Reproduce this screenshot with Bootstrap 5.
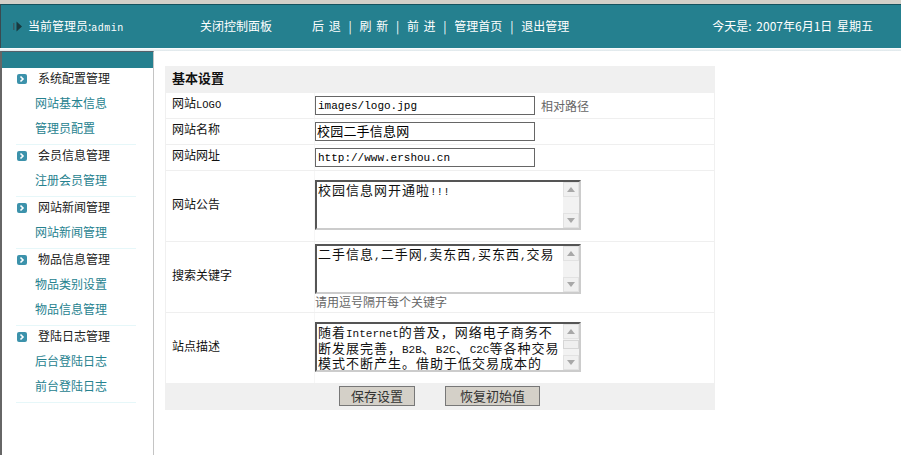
<!DOCTYPE html>
<html lang="zh-CN">
<head>
<meta charset="utf-8">
<title>基本设置</title>
<link href="https://cdn.jsdelivr.net/npm/bootstrap@5.3.0/dist/css/bootstrap.min.css" rel="stylesheet">
<style>
html,body{height:100%;overflow:hidden}
body{font-family:"Noto Sans CJK SC","Liberation Sans",sans-serif;font-size:12px;line-height:1.2;color:#111;background:#fff;width:901px;height:455px}
.page-shell{height:455px;border-top:4px solid #d4d0c8}
.top-band{height:44px;background:#25808f;border-top:1px solid #17525e;border-left:1px solid #3a4a50;color:#fff;padding-left:12px;flex:none}
.top-who{width:187px}
.top-glyph{width:15px;flex:none}
.who-name{font-family:"Liberation Mono",monospace;font-size:10px;letter-spacing:.5px}
.top-close{width:112px}
.top-nav{gap:7.75px;word-spacing:2px}
.top-date{margin-left:auto;padding-right:28px;word-spacing:2px}
.band-gap{height:3px;flex:none;background:linear-gradient(#fff 0,#dde6ea 100%)}
.lower-area{flex:1;min-height:0}
.side-col{width:154px;flex:none;border-left:2px solid #666;border-right:1px solid #c4c4c4;border-top:1px solid #55606a}
.side-cap{height:16px;background:#25808f}
.side-group{margin:0 17px 0 14px;padding-bottom:1px;border-bottom:1px solid #e6f7f9}
.side-head{height:25px;padding:0 0 4px 1px;color:#222}
.side-group:first-of-type .side-head{height:23px}
.side-glyph{width:10px;height:10px;margin-right:11px;flex:none}
.side-link{height:25px;padding:0 0 5px 19px;color:#26828f;text-decoration:none}
.side-link:hover{color:#26828f}
.main-col{padding:15px 0 0 11px}
.form-panel{width:550px;border-left:1px solid #f0f0f0;border-right:1px solid #f0f0f0}
.panel-title{height:27px;background:#f0f0f0;padding:0 0 3px 6px;font-weight:700;font-size:13px;color:#111}
.form-line{border-bottom:1px solid #efefef}
.line-s{height:26px}
.line-l{height:71px}
.line-m{height:70px;border-bottom:0}
.line-label{width:148px;flex:none;padding:0 0 4px 6px}
.label-latin{font-family:"Liberation Mono",monospace;font-size:10.5px;line-height:0;padding-top:1px}
.line-value{border-left:1px solid #f6f6f6;padding-left:0}
.field-text{width:220px;height:19px;border:1px solid #666;border-radius:0;padding:1px 2px 0;background:#fff;color:#000;outline:none;font-family:"Liberation Mono",monospace;font-size:11px}
.field-cjk{font-family:"Noto Sans CJK SC",sans-serif;font-size:13px;padding:0 0 2px 1px;letter-spacing:.2px}
.field-hint{color:#666;margin:2px 0 0 6px}
.hint-below{color:#666;margin-top:1px}
.area-box{width:266px;height:50px;border:2px solid;border-color:#555 #ccc #ccc #555}
.field-area{flex:1 1 auto;min-width:0;padding:0 0 0 1px;background:#fff;color:#111;outline:none;overflow:hidden;font-family:"Noto Sans CJK SC",sans-serif;font-size:13px;line-height:15.7px;letter-spacing:1px}
.area-latin{font-family:"Liberation Mono",monospace;font-size:11px;letter-spacing:0;line-height:0}
.bar-col{width:16px;flex:none;background:#f2f2f2}
.bar-btn{height:15px;flex:none;background:#f0f0f0;border:1px solid #e2e2e2}
.bar-track{flex:1;min-height:0}
.bar-thumb{height:9px;margin-top:1px;background:#efefef;border:1px solid #d6d6d6}
.pad-9{padding-top:9px}
.pad-2{padding-top:2px}
.panel-actions{height:27px;background:#f0f0f0;gap:30px;padding:0 1px 2px 0}
.act-btn{height:20px;padding:0;border:1px solid #777;border-radius:0;background:#d4d0c8;color:#333;font-size:13px;line-height:1}
.act-btn:hover,.act-btn:active{background:#d4d0c8!important;border-color:#777!important;color:#333!important}
.act-save{width:76px}
.act-reset{width:95px}
</style>
</head>
<body>
<svg width="0" height="0" class="d-block position-absolute" aria-hidden="true">
  <symbol id="chev" viewBox="0 0 10 10"><rect width="10" height="10" rx="2" fill="#3c92ab"/><path d="M3.500 2.500 6 5 3.500 7.500" fill="none" stroke="#fff" stroke-width="1.600"/></symbol>
  <symbol id="bar-up" viewBox="0 0 8 5"><path d="M4 0 8 5H0z" fill="#a8a8a8"/></symbol>
  <symbol id="bar-down" viewBox="0 0 8 5"><path d="M4 5 8 0H0z" fill="#a8a8a8"/></symbol>
</svg>
<div class="page-shell d-flex flex-column">
  <header class="top-band d-flex align-items-center">
    <div class="top-who d-flex align-items-center">
      <svg class="top-glyph" height="11" viewBox="0 0 15 11" aria-hidden="true"><path d="M0 2h1.500v7H0z" fill="#3b5a62"/><path d="M3.500 0.500 9 5.500l-5.500 5z" fill="#17393f"/></svg>
      <span>当前管理员:<span class="who-name">admin</span></span>
    </div>
    <div class="top-close">关闭控制面板</div>
    <nav class="top-nav d-flex">
      <span>后 退</span><span>|</span><span>刷 新</span><span>|</span><span>前 进</span><span>|</span><span>管理首页</span><span>|</span><span>退出管理</span>
    </nav>
    <div class="top-date">今天是: 2007年6月1日 星期五</div>
  </header>
  <div class="band-gap"></div>
  <div class="lower-area d-flex">
    <aside class="side-col">
      <div class="side-cap"></div>
      <div class="side-group">
        <div class="side-head d-flex align-items-center"><svg class="side-glyph" aria-hidden="true"><use href="#chev"/></svg>系统配置管理</div>
        <a class="side-link d-flex align-items-center" href="#">网站基本信息</a>
        <a class="side-link d-flex align-items-center" href="#">管理员配置</a>
      </div>
      <div class="side-group">
        <div class="side-head d-flex align-items-center"><svg class="side-glyph" aria-hidden="true"><use href="#chev"/></svg>会员信息管理</div>
        <a class="side-link d-flex align-items-center" href="#">注册会员管理</a>
      </div>
      <div class="side-group">
        <div class="side-head d-flex align-items-center"><svg class="side-glyph" aria-hidden="true"><use href="#chev"/></svg>网站新闻管理</div>
        <a class="side-link d-flex align-items-center" href="#">网站新闻管理</a>
      </div>
      <div class="side-group">
        <div class="side-head d-flex align-items-center"><svg class="side-glyph" aria-hidden="true"><use href="#chev"/></svg>物品信息管理</div>
        <a class="side-link d-flex align-items-center" href="#">物品类别设置</a>
        <a class="side-link d-flex align-items-center" href="#">物品信息管理</a>
      </div>
      <div class="side-group">
        <div class="side-head d-flex align-items-center"><svg class="side-glyph" aria-hidden="true"><use href="#chev"/></svg>登陆日志管理</div>
        <a class="side-link d-flex align-items-center" href="#">后台登陆日志</a>
        <a class="side-link d-flex align-items-center" href="#">前台登陆日志</a>
      </div>
    </aside>
    <main class="main-col flex-grow-1">
      <form class="form-panel">
        <div class="panel-title d-flex align-items-center">基本设置</div>
        <div class="form-line line-s d-flex">
          <div class="line-label d-flex align-items-center"><span>网站<span class="label-latin">LOGO</span></span></div>
          <div class="line-value d-flex align-items-center flex-grow-1"><input class="field-text" type="text" value="images/logo.jpg"><span class="field-hint">相对路径</span></div>
        </div>
        <div class="form-line line-s d-flex">
          <div class="line-label d-flex align-items-center">网站名称</div>
          <div class="line-value d-flex align-items-center flex-grow-1"><input class="field-text field-cjk" type="text" value="校园二手信息网"></div>
        </div>
        <div class="form-line line-s d-flex">
          <div class="line-label d-flex align-items-center">网站网址</div>
          <div class="line-value d-flex align-items-center flex-grow-1"><input class="field-text" type="text" value="http://www.ershou.cn"></div>
        </div>
        <div class="form-line line-l d-flex">
          <div class="line-label d-flex align-items-center">网站公告</div>
          <div class="line-value pad-9 flex-grow-1">
            <div class="area-box d-flex">
              <div class="field-area" role="textbox" contenteditable="true">校园信息网开通啦<span class="area-latin">!!!</span></div>
              <div class="bar-col d-flex flex-column">
                <div class="bar-btn d-flex align-items-center justify-content-center"><svg width="8" height="5" aria-hidden="true"><use href="#bar-up"/></svg></div>
                <div class="bar-track"></div>
                <div class="bar-btn d-flex align-items-center justify-content-center"><svg width="8" height="5" aria-hidden="true"><use href="#bar-down"/></svg></div>
              </div>
            </div>
          </div>
        </div>
        <div class="form-line line-l d-flex">
          <div class="line-label d-flex align-items-center">搜索关键字</div>
          <div class="line-value pad-2 flex-grow-1">
            <div class="area-box d-flex">
              <div class="field-area" role="textbox" contenteditable="true">二手信息<span class="area-latin">,</span>二手网<span class="area-latin">,</span>卖东西<span class="area-latin">,</span>买东西<span class="area-latin">,</span>交易</div>
              <div class="bar-col d-flex flex-column">
                <div class="bar-btn d-flex align-items-center justify-content-center"><svg width="8" height="5" aria-hidden="true"><use href="#bar-up"/></svg></div>
                <div class="bar-track"></div>
                <div class="bar-btn d-flex align-items-center justify-content-center"><svg width="8" height="5" aria-hidden="true"><use href="#bar-down"/></svg></div>
              </div>
            </div>
            <div class="hint-below">请用逗号隔开每个关键字</div>
          </div>
        </div>
        <div class="form-line line-m d-flex">
          <div class="line-label d-flex align-items-center">站点描述</div>
          <div class="line-value pad-9 flex-grow-1">
            <div class="area-box d-flex">
              <div class="field-area" role="textbox" contenteditable="true">随着<span class="area-latin">Internet</span>的普及，网络电子商务不断发展完善，<span class="area-latin">B2B</span>、<span class="area-latin">B2C</span>、<span class="area-latin">C2C</span>等各种交易模式不断产生。借助于低交易成本的<br>优势，电子商务迅速发展，二手交易也日益兴起。</div>
              <div class="bar-col d-flex flex-column">
                <div class="bar-btn d-flex align-items-center justify-content-center"><svg width="8" height="5" aria-hidden="true"><use href="#bar-up"/></svg></div>
                <div class="bar-track"><div class="bar-thumb"></div></div>
                <div class="bar-btn d-flex align-items-center justify-content-center"><svg width="8" height="5" aria-hidden="true"><use href="#bar-down"/></svg></div>
              </div>
            </div>
          </div>
        </div>
        <div class="panel-actions d-flex justify-content-center align-items-center">
          <button type="button" class="btn act-btn act-save">保存设置</button>
          <button type="button" class="btn act-btn act-reset">恢复初始值</button>
        </div>
      </form>
    </main>
  </div>
</div>
<script src="https://cdn.jsdelivr.net/npm/bootstrap@5.3.0/dist/js/bootstrap.bundle.min.js"></script>
</body>
</html>
